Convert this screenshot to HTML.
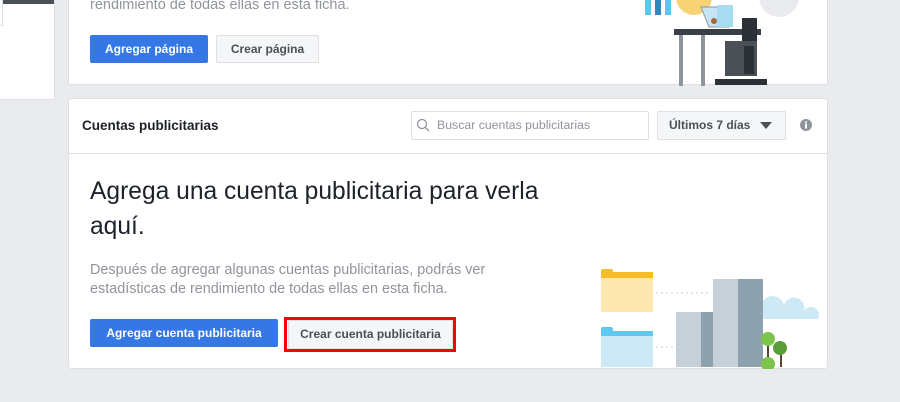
<!DOCTYPE html>
<html><head><meta charset="utf-8"><style>
*{margin:0;padding:0;box-sizing:border-box}
body{width:900px;height:402px;background:#e9ebee;font-family:"Liberation Sans",Arial,sans-serif;position:relative;overflow:hidden}
.abs{position:absolute}
.card{position:absolute;background:#fff;border:1px solid #dddfe2;border-radius:3px}
.btn{position:absolute;height:28px;font-size:12px;font-weight:bold;line-height:26px;text-align:center;border-radius:2px;white-space:nowrap}
.blue{background:#3578e5;color:#fff;border:1px solid #3578e5}
.grey{background:#f5f6f7;color:#4b4f56;border:1px solid #dddfe2}
</style></head><body>
<div class="abs" style="left:0;top:0;width:55px;height:100px;background:#fff;border:1px solid #dddfe2;border-left:0;border-top:0"></div>
<div class="abs" style="left:0;top:0;width:54px;height:4px;background:#4b4f56"></div>
<div class="abs" style="left:0;top:0;width:3px;height:26px;border-right:1px solid #dddfe2;border-bottom:1px solid #dddfe2;background:#fff"></div>

<div class="card" style="left:68px;top:-10px;width:760px;height:95px">
<div class="abs" style="left:21px;top:6px;font-size:14.5px;color:#90949c">rendimiento de todas ellas en esta ficha.</div>
<div class="btn blue" style="left:21px;top:44px;width:118px">Agregar página</div>
<div class="btn grey" style="left:147px;top:44px;width:103px">Crear página</div>
<svg class="abs" style="left:560px;top:0" width="200" height="95" viewBox="0 0 200 95">
<rect x="16" y="0" width="6" height="24" fill="#5bc6f0"/><rect x="26" y="0" width="6" height="24" fill="#2a8ac0"/><rect x="36" y="0" width="6" height="24" fill="#5bc6f0"/>
<circle cx="65" cy="6" r="18" fill="#f7d376"/>
<circle cx="150" cy="6" r="20" fill="#e9ebee"/>
<polygon points="72,16 92,16 100,36 80,36" fill="#c7e4f4" stroke="#8d949e"/>
<rect x="88" y="14" width="16" height="22" fill="#a7dcf0"/>
<circle cx="85" cy="30" r="3" fill="#a0693a"/>
<rect x="45" y="38" width="87" height="6" fill="#3a3f47"/>
<rect x="50" y="44" width="4" height="51" fill="#8d949e"/><rect x="72" y="44" width="4" height="51" fill="#8d949e"/>
<rect x="113" y="27" width="15" height="36" fill="#2b2f36"/>
<rect x="96" y="50" width="32" height="35" fill="#4b4f56"/>
<rect x="115" y="55" width="10" height="28" fill="#2b2f36"/>
<rect x="86" y="88" width="52" height="6" fill="#2b2f36"/>
</svg>
</div>

<div class="card" style="left:68px;top:98px;width:760px;height:271px">
<div class="abs" style="left:13px;top:19px;font-size:13.5px;font-weight:bold;color:#1d2129">Cuentas publicitarias</div>
<div class="abs" style="left:342px;top:12px;width:238px;height:29px;border:1px solid #dddfe2;border-radius:2px"></div>
<svg class="abs" style="left:347px;top:19px" width="14" height="14" viewBox="0 0 14 14"><circle cx="6" cy="6" r="4.5" fill="none" stroke="#90949c" stroke-width="1.3"/><line x1="9.3" y1="9.3" x2="13" y2="13" stroke="#90949c" stroke-width="1.3"/></svg>
<div class="abs" style="left:368px;top:19px;font-size:12.3px;color:#90949c">Buscar cuentas publicitarias</div>
<div class="abs" style="left:588px;top:12px;width:129px;height:29px;border:1px solid #dddfe2;border-radius:2px;background:#f5f6f7;font-size:12px;font-weight:bold;color:#4b4f56;line-height:27px;padding-left:11px;white-space:nowrap">Últimos 7 días</div>
<svg class="abs" style="left:691px;top:23px" width="12" height="8"><polygon points="0,0 12,0 6,7" fill="#4b4f56"/></svg>
<svg class="abs" style="left:731px;top:20px" width="12" height="12"><circle cx="6" cy="6" r="6" fill="#90949c"/><rect x="5" y="5" width="2" height="4.5" fill="#fff"/><rect x="5" y="2.5" width="2" height="1.8" fill="#fff"/></svg>
<div class="abs" style="left:0;top:54px;width:758px;height:1px;background:#dddfe2"></div>
<div class="abs" style="left:21px;top:75px;font-size:24.6px;line-height:35px;color:#1d2129;width:480px">Agrega una cuenta publicitaria para verla aquí.</div>
<div class="abs" style="left:21px;top:162px;font-size:14.4px;line-height:19px;color:#90949c;width:450px">Después de agregar algunas cuentas publicitarias, podrás ver estadísticas de rendimiento de todas ellas en esta ficha.</div>
<div class="btn blue" style="left:21px;top:220px;width:188px">Agregar cuenta publicitaria</div>
<div class="abs" style="left:215px;top:218px;width:172px;height:35px;border:3px solid #f00"></div>
<div class="btn grey" style="left:219px;top:221px;width:165px;height:29px;line-height:27px">Crear cuenta publicitaria</div>
<svg class="abs" style="left:512px;top:160px" width="240" height="110" viewBox="580 260 240 110">
<rect x="600" y="273" width="52" height="6" fill="#f5bd2a"/><rect x="600" y="270" width="12" height="6" rx="2" fill="#f5bd2a"/><rect x="600" y="279" width="52" height="34" fill="#fde7b0"/>
<rect x="600" y="332" width="52" height="5" fill="#60c8f0"/><rect x="600" y="328" width="12" height="6" rx="2" fill="#60c8f0"/><rect x="600" y="337" width="52" height="31" fill="#cde9f6"/>
<line x1="655" y1="294" x2="708" y2="294" stroke="#ccd0d5" stroke-dasharray="2,3"/>
<line x1="655" y1="348" x2="672" y2="348" stroke="#ccd0d5" stroke-dasharray="2,3"/>
<path d="M760 320 h57 a8 8 0 0 0 -14 -8 a10 10 0 0 0 -20 -6 a8 8 0 0 0 -23 6z" fill="#cde9f6"/>
<rect x="675" y="313" width="25" height="55" fill="#c5d0d8"/><rect x="700" y="313" width="12" height="55" fill="#8da2ae"/>
<rect x="712" y="280" width="25" height="88" fill="#c5d0d8"/><rect x="737" y="280" width="25" height="88" fill="#8da2ae"/>
<rect x="766" y="340" width="2" height="28" fill="#5b4636"/><rect x="779" y="345" width="2" height="23" fill="#5b4636"/>
<circle cx="767" cy="340" r="7" fill="#7dc44a"/><circle cx="779" cy="349" r="7" fill="#5a9e3a"/><circle cx="767" cy="365" r="7" fill="#7dc44a"/>
</svg>
</div>
</body></html>
